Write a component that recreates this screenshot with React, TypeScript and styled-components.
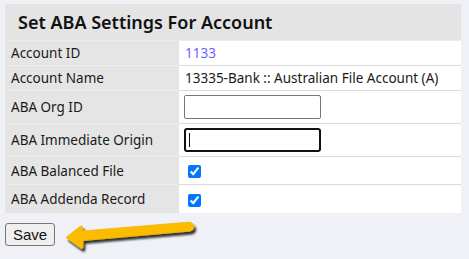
import React from "react";
import styled, { createGlobalStyle } from "styled-components";

const Global = createGlobalStyle`
  html, body { margin: 0; padding: 0; background: #eff1f6; }
  body { font-family: "Noto Sans", "Open Sans", sans-serif; width: 469px; height: 259px; overflow: hidden; }
`;

const Page = styled.div`
  position: relative;
  padding: 4px 0 0 5px;
`;

const Table = styled.table`
  width: 456px;
  border-collapse: collapse;
  border-spacing: 0;
  font-size: 13.5px;
  color: #1a1a1a;
`;

const HeadCell = styled.th`
  background: #e4e4e4;
  text-align: left;
  font-size: 18px;
  font-weight: 600;
  color: #111;
  height: 36px;
  padding: 0 0 0 13px;
  border-bottom: 1px solid #ececec;
`;

const Row = styled.tr<{ $h: number }>`
  height: ${(p) => p.$h}px;
`;

const Label = styled.td`
  width: 168px;
  background: #e5e5e5;
  padding: 0 0 0 6px;
  border-bottom: 1px solid #ededed;
  white-space: nowrap;
`;

const Value = styled.td`
  background: #ffffff;
  padding: 0 0 0 5px;
  border-bottom: 1px solid #dadada;
  white-space: nowrap;
`;

const LastLabel = styled(Label)`
  border-bottom: none;
`;
const LastValue = styled(Value)`
  border-bottom: none;
`;

const IdLink = styled.a`
  color: #6b63ff;
  text-decoration: none;
  padding-left: 1px;
`;

const NameText = styled.span`
  padding-left: 1px;
`;

const TextBox = styled.input<{ $focused?: boolean }>`
  box-sizing: border-box;
  display: block;
  width: 137px;
  height: 24px;
  margin: 0;
  background: #fff;
  border: ${(p) => (p.$focused ? "2px solid #111" : "1px solid #767676")};
  border-radius: ${(p) => (p.$focused ? "3px" : "2px")};
  outline: none;
  padding: 0 4px;
`;

const InputWrap = styled.span`
  position: relative;
  display: inline-block;
  vertical-align: middle;
`;

const Caret = styled.span`
  position: absolute;
  left: 5px;
  top: 5px;
  width: 1px;
  height: 14px;
  background: #111;
`;

const Check = styled.input`
  width: 13px;
  height: 13px;
  margin: 0 0 0 4px;
  vertical-align: middle;
  accent-color: #0075ff;
`;

const Footer = styled.div`
  padding-top: 10px;
`;

const SaveButton = styled.button`
  box-sizing: border-box;
  width: 50px;
  height: 23px;
  font-family: "Liberation Sans", Arial, sans-serif;
  font-size: 15px;
  color: #111;
  background: #efefef;
  border: 1px solid #767676;
  border-radius: 3px;
  padding: 0;
`;

const Arrow = styled.svg`
  position: absolute;
  left: 60px;
  top: 218px;
  overflow: visible;
`;

export default function App() {
  return (
    <>
      <Global />
      <Page>
        <Table>
          <thead>
            <tr>
              <HeadCell colSpan={2}>Set ABA Settings For Account</HeadCell>
            </tr>
          </thead>
          <tbody>
            <Row $h={25}>
              <Label>Account ID</Label>
              <Value>
                <IdLink href="#">1133</IdLink>
              </Value>
            </Row>
            <Row $h={25}>
              <Label>Account Name</Label>
              <Value>
                <NameText>13335-Bank :: Australian File Account (A)</NameText>
              </Value>
            </Row>
            <Row $h={33}>
              <Label>ABA Org ID</Label>
              <Value>
                <InputWrap>
                  <TextBox type="text" />
                </InputWrap>
              </Value>
            </Row>
            <Row $h={33}>
              <Label>ABA Immediate Origin</Label>
              <Value>
                <InputWrap>
                  <TextBox type="text" $focused />
                  <Caret />
                </InputWrap>
              </Value>
            </Row>
            <Row $h={28}>
              <Label>ABA Balanced File</Label>
              <Value>
                <Check type="checkbox" defaultChecked />
              </Value>
            </Row>
            <Row $h={28}>
              <LastLabel>ABA Addenda Record</LastLabel>
              <LastValue>
                <Check type="checkbox" defaultChecked />
              </LastValue>
            </Row>
          </tbody>
        </Table>
        <Footer>
          <SaveButton type="button">Save</SaveButton>
        </Footer>
        <Arrow width="140" height="34" viewBox="0 0 140 34">
          <defs>
            <filter id="sh" x="-20%" y="-50%" width="140%" height="200%">
              <feGaussianBlur in="SourceAlpha" stdDeviation="1.3" />
              <feOffset dx="2" dy="3" result="b" />
              <feComponentTransfer>
                <feFuncA type="linear" slope="0.8" />
              </feComponentTransfer>
              <feMerge>
                <feMergeNode />
                <feMergeNode in="SourceGraphic" />
              </feMerge>
            </filter>
          </defs>
          <g filter="url(#sh)">
            <path
              d="M6 19.5 L20 8.5 Q22.5 7 22.5 10 L22.5 13 L128 4.2 Q133.5 4 133.8 8.5 Q134 13 128.5 13.2 L23 22.5 L23 28.5 Q23 31.5 20.5 30 Z"
              fill="#fbbc05"
              stroke="#f4b400"
              strokeWidth="0.8"
              strokeLinejoin="round"
            />
          </g>
        </Arrow>
      </Page>
    </>
  );
}
